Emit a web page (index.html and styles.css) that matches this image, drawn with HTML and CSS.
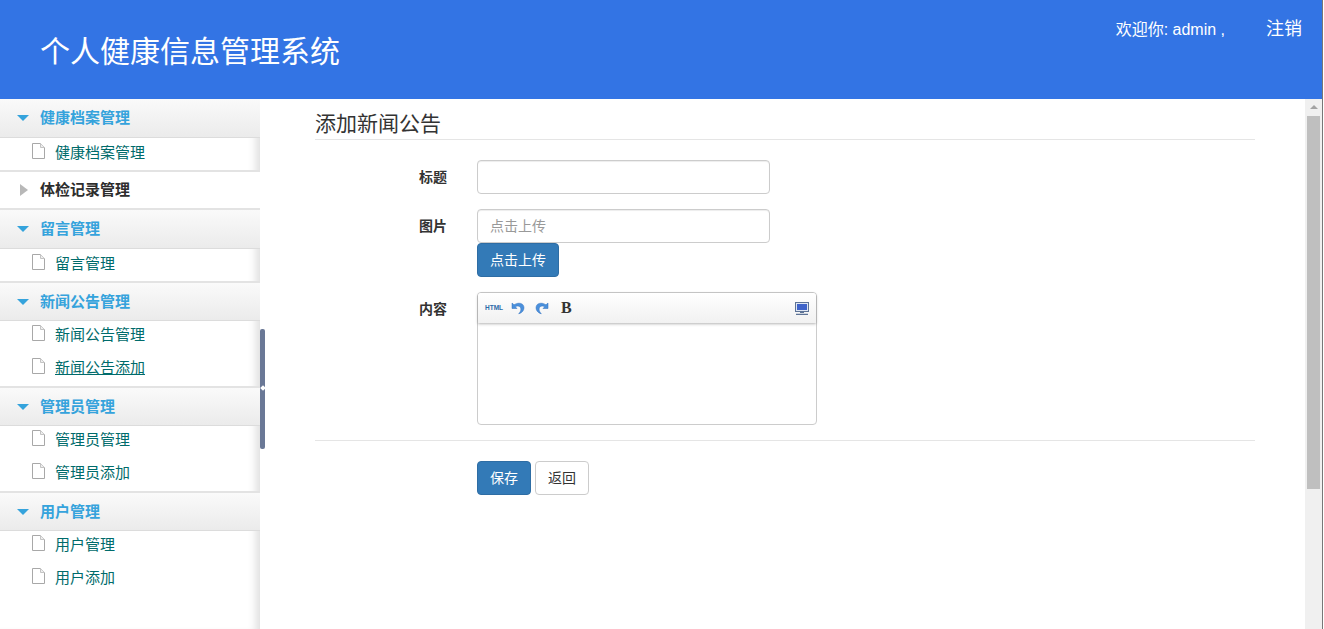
FILE: index.html
```html
<!DOCTYPE html>
<html lang="zh-CN">
<head>
<meta charset="utf-8">
<title>个人健康信息管理系统</title>
<link rel="stylesheet" href="styles.css">
</head>
<body>
<header class="topbar">
  <h1 class="brand">个人健康信息管理系统</h1>
  <div class="user">
    <span class="welcome">欢迎你: admin ,</span>
    <a class="logout">注销</a>
  </div>
</header>
<div class="body-row">
  <nav class="sidebar">
    <section class="group">
      <h3 class="group-head"><span class="arrow-down"></span>健康档案管理</h3>
      <ul class="sub">
        <li class="item"><svg class="file" viewBox="0 0 13 16"><path d="M.5.5h8l4 4v11H.5z" fill="#fff" stroke="#a8a8a8"/><path d="M8.5.5v4h4" fill="#eee" stroke="#c4c4c4"/></svg><a>健康档案管理</a></li>
      </ul>
    </section>
    <section class="group closed">
      <h3 class="group-head"><span class="arrow-right"></span>体检记录管理</h3>
    </section>
    <section class="group">
      <h3 class="group-head"><span class="arrow-down"></span>留言管理</h3>
      <ul class="sub">
        <li class="item"><svg class="file" viewBox="0 0 13 16"><path d="M.5.5h8l4 4v11H.5z" fill="#fff" stroke="#a8a8a8"/><path d="M8.5.5v4h4" fill="#eee" stroke="#c4c4c4"/></svg><a>留言管理</a></li>
      </ul>
    </section>
    <section class="group multi">
      <h3 class="group-head"><span class="arrow-down"></span>新闻公告管理</h3>
      <ul class="sub">
        <li class="item"><svg class="file" viewBox="0 0 13 16"><path d="M.5.5h8l4 4v11H.5z" fill="#fff" stroke="#a8a8a8"/><path d="M8.5.5v4h4" fill="#eee" stroke="#c4c4c4"/></svg><a>新闻公告管理</a></li>
        <li class="item"><svg class="file" viewBox="0 0 13 16"><path d="M.5.5h8l4 4v11H.5z" fill="#fff" stroke="#a8a8a8"/><path d="M8.5.5v4h4" fill="#eee" stroke="#c4c4c4"/></svg><a class="active">新闻公告添加</a></li>
      </ul>
    </section>
    <section class="group multi">
      <h3 class="group-head"><span class="arrow-down"></span>管理员管理</h3>
      <ul class="sub">
        <li class="item"><svg class="file" viewBox="0 0 13 16"><path d="M.5.5h8l4 4v11H.5z" fill="#fff" stroke="#a8a8a8"/><path d="M8.5.5v4h4" fill="#eee" stroke="#c4c4c4"/></svg><a>管理员管理</a></li>
        <li class="item"><svg class="file" viewBox="0 0 13 16"><path d="M.5.5h8l4 4v11H.5z" fill="#fff" stroke="#a8a8a8"/><path d="M8.5.5v4h4" fill="#eee" stroke="#c4c4c4"/></svg><a>管理员添加</a></li>
      </ul>
    </section>
    <section class="group multi last">
      <h3 class="group-head"><span class="arrow-down"></span>用户管理</h3>
      <ul class="sub">
        <li class="item"><svg class="file" viewBox="0 0 13 16"><path d="M.5.5h8l4 4v11H.5z" fill="#fff" stroke="#a8a8a8"/><path d="M8.5.5v4h4" fill="#eee" stroke="#c4c4c4"/></svg><a>用户管理</a></li>
        <li class="item"><svg class="file" viewBox="0 0 13 16"><path d="M.5.5h8l4 4v11H.5z" fill="#fff" stroke="#a8a8a8"/><path d="M8.5.5v4h4" fill="#eee" stroke="#c4c4c4"/></svg><a>用户添加</a></li>
      </ul>
    </section>
    <div class="splitter"><span class="splitter-dot"></span></div>
  </nav>
  <main class="content">
    <h2 class="page-title">添加新闻公告</h2>
    <form class="form">
      <div class="row row-title">
        <label class="label">标题</label>
        <div class="field"><input class="input" type="text"></div>
      </div>
      <div class="row row-image">
        <label class="label">图片</label>
        <div class="field">
          <input class="input" type="text" placeholder="点击上传">
          <button class="btn primary upload" type="button">点击上传</button>
        </div>
      </div>
      <div class="row row-body">
        <label class="label">内容</label>
        <div class="editor">
          <div class="toolbar">
            <span class="tool-html">HTML</span>
            <svg class="tool-icon" viewBox="0 0 14 14"><path d="M1 2l0 5.500 5 0-1.700-1.700c2.400-1.600 5.400-.6 5.600 2.200.1 1.700-.8 3.200-2.200 4.800 3.600-1 5.600-3.700 5.200-6.900C12.400 2.200 7.600.9 3 3.800z" fill="#4a90dc" stroke="#2f6fbf" stroke-width=".5"/></svg>
            <svg class="tool-icon" viewBox="0 0 14 14"><path d="M13 2l0 5.500-5 0 1.700-1.700C7.300 4.200 4.300 5.200 4.100 8c-.1 1.700.8 3.200 2.200 4.800C2.700 11.800.7 9.100 1.100 5.900 1.600 2.200 6.400.9 11 3.800z" fill="#4a90dc" stroke="#2f6fbf" stroke-width=".5"/></svg>
            <span class="tool-bold">B</span>
            <svg class="tool-screen" viewBox="0 0 14 13"><rect x=".5" y=".5" width="13" height="9" fill="#dfe6f2" stroke="#5d7396"/><rect x="2" y="2" width="10" height="6" fill="#3f63c9"/><path d="M5 10.500h4M1 12.300h12" stroke="#5d7396" stroke-width="1.200"/></svg>
          </div>
          <div class="editor-area"></div>
        </div>
      </div>
      <div class="actions">
        <button class="btn primary" type="button">保存</button>
        <button class="btn" type="button">返回</button>
      </div>
    </form>
  </main>
  <aside class="scrollbar">
    <span class="scroll-up"></span>
    <span class="scroll-thumb"></span>
  </aside>
</div>
<div class="edge"></div>
</body>
</html>
```
FILE: styles.css
```css
* { box-sizing: border-box; }
html, body { margin: 0; height: 100%; overflow: hidden; }
body {
  display: flex;
  flex-direction: column;
  background: #fff;
  color: #333;
  font: 14px/20px "Liberation Sans", "Noto Sans CJK SC", sans-serif;
}
.topbar {
  flex: 0 0 99px;
  display: flex;
  justify-content: space-between;
  background: #3374e4;
  color: #fff;
}
.brand {
  margin: 30px 0 0 40px;
  font-size: 30px;
  line-height: 44px;
  font-weight: 400;
}
.user { display: flex; align-items: flex-start; padding: 16px 22px 0 0; }
.welcome { font-size: 16px; line-height: 28px; margin-right: 41px; }
.logout { font-size: 18px; line-height: 26px; }

.body-row { flex: 1; display: flex; min-height: 0; padding-right: 2px; }

.sidebar {
  position: relative;
  flex: 0 0 260px;
  background: #fff;
  box-shadow: inset -10px 0 8px -6px rgba(0,0,0,.13);
}
.group { border-bottom: 2px solid #e3e3e3; }
.group.last { border-bottom: 0; }
.group-head {
  display: flex;
  align-items: center;
  height: 39px;
  margin: 0;
  padding-left: 17px;
  font-size: 15px;
  font-weight: 700;
  color: #35a3dc;
  background: linear-gradient(#fafafa, #ebebeb);
  border-bottom: 1px solid #dcdcdc;
}
.multi .group-head { height: 38px; }
.closed .group-head {
  height: 36px;
  padding-left: 20px;
  color: #2d2d2d;
  background: #fff;
  border-bottom: 0;
}
.arrow-down {
  width: 0; height: 0;
  margin-right: 11px;
  border: 6px solid transparent;
  border-top: 6px solid #35a3dc;
  border-bottom: 0;
}
.arrow-right {
  width: 0; height: 0;
  margin-right: 12px;
  border: 6.500px solid transparent;
  border-left: 8px solid #b8b8b8;
  border-right: 0;
}
.sub { margin: 0; padding: 0; list-style: none; }
.item {
  display: flex;
  align-items: center;
  height: 32px;
  padding: 0 0 3px 32px;
  font-size: 15px;
  color: #006b6b;
}
.multi .item { height: 32.5px; padding-bottom: 4px; }
.file { width: 13px; height: 16px; margin: -4px 10px 0 0; flex: none; }
.active { text-decoration: underline; }
.splitter {
  position: absolute;
  left: 260px;
  top: 230px;
  width: 5px;
  height: 120px;
  border-radius: 2px;
  background: #6a7896;
}
.splitter-dot {
  position: absolute;
  left: 1px;
  top: 57px;
  width: 4px;
  height: 4px;
  background: #fff;
  transform: rotate(45deg);
}

.content { flex: 1; min-width: 0; padding: 0 50px 0 55px; }
.page-title {
  margin: 0;
  height: 41px;
  padding-top: 13px;
  font-size: 21px;
  line-height: 24px;
  font-weight: 400;
  color: #333;
  border-bottom: 1px solid #e5e5e5;
}
.form { display: flex; flex-direction: column; }
.row { display: flex; }
.row-title { margin-top: 20px; }
.row-image { margin-top: 15px; }
.row-body { margin-top: 15px; }
.label {
  flex: 0 0 162px;
  padding: 7px 30px 0 0;
  text-align: right;
  font-size: 14px;
  font-weight: 700;
}
.field { width: 293px; display: flex; flex-direction: column; align-items: flex-start; }
.input {
  display: block;
  width: 100%;
  height: 34px;
  padding: 6px 12px;
  border: 1px solid #ccc;
  border-radius: 4px;
  font: inherit;
  color: #555;
  background: #fff;
  box-shadow: inset 0 1px 1px rgba(0,0,0,.075);
}
.input::placeholder { color: #999; }
.btn {
  height: 34px;
  padding: 6px 12px;
  border: 1px solid #ccc;
  border-radius: 4px;
  background: #fff;
  color: #333;
  font: inherit;
}
.primary { background: #337ab7; border-color: #2e6da4; color: #fff; }
.editor {
  width: 340px;
  height: 133px;
  border: 1px solid #ccc;
  border-radius: 4px;
}
.toolbar {
  display: flex;
  align-items: center;
  height: 30px;
  padding: 0 7px;
  background: linear-gradient(#fff, #f1f1f1);
  border-radius: 3px 3px 0 0;
  box-shadow: 0 1px 3px rgba(0,0,0,.3);
}
.tool-html {
  width: 18px;
  margin-right: 8px;
  font-size: 6.500px;
  line-height: 8px;
  font-weight: 700;
  color: #2b6aa8;
}
.tool-icon { width: 14px; height: 14px; margin-right: 10px; flex: none; }
.tool-bold {
  margin-left: 2px;
  font: 700 16px/20px "Liberation Serif", serif;
  color: #333;
}
.tool-screen { width: 14px; height: 13px; margin-left: auto; flex: none; }
.editor-area { height: 100px; }
.actions {
  display: flex;
  gap: 4px;
  margin-top: 15px;
  padding: 20px 0 0 162px;
  border-top: 1px solid #e5e5e5;
}

.scrollbar {
  flex: 0 0 17px;
  display: flex;
  flex-direction: column;
  align-items: center;
  background: #f0f0f0;
}
.scroll-up {
  margin-top: 6px;
  width: 0; height: 0;
  border: 4px solid transparent;
  border-bottom: 4px solid #a3a3a3;
  border-top: 0;
}
.scroll-thumb {
  margin-top: 7px;
  width: 13px;
  height: 373px;
  background: #bfbfbf;
}
.edge {
  position: absolute;
  top: 0;
  right: 0;
  bottom: 0;
  width: 2px;
  border-left: 1px solid #777;
  background: #fff;
}
```
